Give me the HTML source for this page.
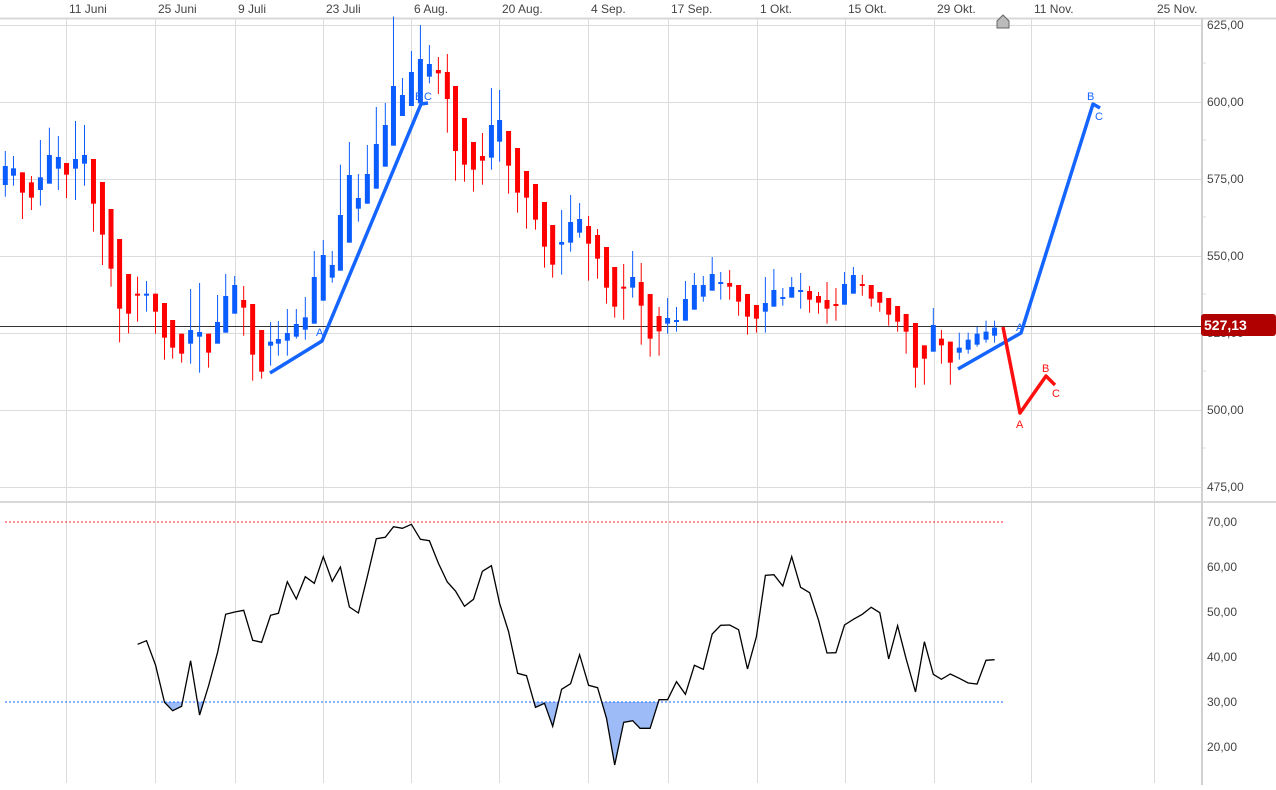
<!DOCTYPE html>
<html><head><meta charset="utf-8"><style>
html,body{margin:0;padding:0;background:#fff;}
svg{display:block;font-family:"Liberation Sans",Arial,sans-serif;}
</style></head><body>
<svg id="s" width="1276" height="790" xmlns="http://www.w3.org/2000/svg">
<rect width="1276" height="790" fill="#fff"/>
<g id="grid" stroke="#dcdcdc" stroke-width="1"></g>
<line x1="0" y1="18.5" x2="1276" y2="18.5" stroke="#d8d8d8" stroke-width="2"/>
<line x1="0" y1="502" x2="1276" y2="502" stroke="#d8d8d8" stroke-width="2"/>
<line x1="1202" y1="18" x2="1202" y2="785" stroke="#d0d0d0" stroke-width="2"/>
<g id="dates" font-size="12" fill="#444"></g>
<g id="yl" font-size="12" fill="#444"></g>
<path d="M997 28 L997 21 L1003 15 L1009 21 L1009 28 Z" fill="#bbb" stroke="#666" stroke-width="1"/>
<line x1="0" y1="326.5" x2="1202" y2="326.5" stroke="#333" stroke-width="1"/>
<g id="candles"></g>
<g fill="none" stroke="#1464ff" stroke-width="3.5" stroke-linejoin="round">
<polyline points="270,373 322,341 421,104 428,103"/>
<polyline points="958,369 1021,333 1093,104 1100,108"/>
</g>
<polyline points="1003,327 1020,413 1046,376 1055,385" fill="none" stroke="#ff1010" stroke-width="3.5" stroke-linejoin="round"/>
<g font-size="11" fill="#1464ff">
<text x="316" y="336">A</text><text x="415" y="100">B</text><text x="424" y="100">C</text>
<text x="1016" y="331">A</text><text x="1087" y="100">B</text><text x="1095" y="120">C</text>
</g>
<g font-size="11" fill="#ff1010">
<text x="1016" y="428">A</text><text x="1042" y="372">B</text><text x="1052" y="397">C</text>
</g>
<rect x="1201" y="314" width="75" height="22" rx="3" fill="#b00000"/>
<text x="1204" y="330" font-size="14" font-weight="bold" fill="#fff">527,13</text>
<line x1="5" y1="522" x2="1003" y2="522" stroke="#ff2020" stroke-width="1" stroke-dasharray="2,2"/>
<defs><clipPath id="below"><rect x="0" y="702" width="1276" height="90"/></clipPath></defs>
<polygon id="fill" clip-path="url(#below)" fill="#9dbcf7"/>
<line x1="5" y1="702" x2="1003" y2="702" stroke="#1464ff" stroke-width="1" stroke-dasharray="2,2"/>
<polyline id="rsi" fill="none" stroke="#000" stroke-width="1.3"/>
</svg>
<script>
var NS="http://www.w3.org/2000/svg",s=document.getElementById('s');
function el(p,t,a,txt){var e=document.createElementNS(NS,t);for(var k in a)e.setAttribute(k,a[k]);if(txt)e.textContent=txt;document.getElementById(p).appendChild(e);return e;}
var vx=[66,155,235,323,411,499,588,668,757,845,934,1031,1154];
vx.forEach(function(x){el('grid','line',{x1:x+.5,y1:19,x2:x+.5,y2:783});});
[25,102,179,256,333,410,487].forEach(function(y){el('grid','line',{x1:0,y1:y+.5,x2:1202,y2:y+.5});});
var dn=["11 Juni","25 Juni","9 Juli","23 Juli","6 Aug.","20 Aug.","4 Sep.","17 Sep.","1 Okt.","15 Okt.","29 Okt.","11 Nov.","25 Nov."];
vx.forEach(function(x,i){el('dates','text',{x:x+3,y:13},dn[i]);});
["625,00","600,00","575,00","550,00","525,00","500,00","475,00"].forEach(function(t,i){el('yl','text',{x:1207,y:29+77*i},t);});
["70,00","60,00","50,00","40,00","30,00","20,00"].forEach(function(t,i){el('yl','text',{x:1207,y:526+45*i},t);});
[63,140,217,294,371,448].forEach(function(y){el('grid','line',{x1:1202,y1:y,x2:1206,y2:y});});
var A=[[13,498,555,453,590,'b'],[33,505,527,468,557,'b'],[55,517,578,517,657,'r'],[77,547,593,528,630,'r'],[99,532,570,420,617,'b'],[121,465,551,383,551,'b'],[143,471,506,408,570,'b'],[163,489,524,489,594,'r'],[185,477,506,363,600,'b'],[207,465,491,375,557,'b'],[229,477,611,477,695,'r'],[251,546,704,546,795,'r'],[272,627,806,627,860,'r'],[293,717,926,717,1027,'r'],[315,822,941,822,1000,'r'],[337,881,885,830,965,'r'],[359,881,885,843,935,'b'],[381,881,935,881,1001,'r'],[403,909,1013,909,1079,'r'],[423,960,1043,960,1076,'r'],[445,1001,1061,1001,1088,'r'],[467,990,1031,867,1091,'b'],[489,996,1010,849,1118,'b'],[511,1001,1058,1001,1103,'r'],[533,966,1031,885,1031,'b'],[553,888,998,822,998,'b'],[575,855,941,828,941,'b'],[597,900,923,858,1007,'r'],[619,912,1064,912,1142,'r'],[641,990,1115,990,1136,'r'],[663,1025,1037,966,1097,'b'],[682,1017,1031,963,1067,'b'],[704,999,1022,927,1067,'b'],[726,972,1010,927,1016,'b'],[748,952,989,891,1019,'b'],[770,831,971,753,971,'b'],[792,765,902,720,902,'b'],[814,795,833,753,848,'b'],[834,645,812,494,812,'b'],[856,525,728,426,728,'b'],[878,594,626,522,665,'b'],[900,522,611,435,611,'b'],[922,432,566,321,566,'b'],[944,375,500,309,500,'b'],[964,258,437,50,437,'b'],[986,285,348,234,348,'b'],[1008,216,318,153,318,'b'],[1030,177,310,75,310,'b'],[1052,192,230,135,250,'b'],[1074,210,220,171,282,'r'],[1096,216,297,162,398,'r'],[1116,258,453,258,542,'r'],[1138,354,494,354,545,'r'],[1160,426,509,426,575,'r'],[1182,468,482,399,554,'r'],[1204,375,473,264,509,'b'],[1224,360,425,270,485,'b'],[1246,393,497,393,581,'r'],[1268,444,578,444,638,'r'],[1290,513,593,513,686,'r'],[1312,552,659,552,689,'r'],[1334,606,740,606,803,'r'],[1354,675,794,675,833,'r'],[1376,726,734,630,824,'b'],[1398,666,728,585,755,'b'],[1420,657,698,609,713,'b'],[1442,678,731,648,842,'r'],[1464,705,776,687,836,'r'],[1486,741,863,741,911,'r'],[1506,801,920,801,953,'r'],[1528,860,866,792,959,'r'],[1550,831,863,753,893,'b']];
var B=[[3,846,917,789,1034,'r'],[25,882,1016,882,1070,'r'],[47,948,994,921,1067,'r'],[68,954,971,894,1001,'b'],[90,960,962,921,995,'b'],[112,897,962,843,962,'b'],[134,855,929,819,929,'b'],[156,855,890,828,905,'b'],[178,822,872,771,872,'b'],[199,846,848,816,899,'b'],[221,849,860,810,899,'r'],[243,855,905,855,947,'r'],[265,882,950,882,1004,'r'],[287,915,956,915,998,'r'],[309,909,935,831,998,'b'],[330,870,920,807,920,'b'],[352,891,896,864,917,'b'],[374,861,893,831,893,'b'],[396,870,875,819,926,'b'],[418,873,899,858,938,'r'],[440,888,908,876,941,'r'],[461,900,926,846,971,'r'],[483,912,914,864,962,'r'],[504,852,914,816,914,'b'],[526,825,881,801,881,'b'],[548,852,854,825,887,'r'],[570,855,896,855,920,'r'],[591,876,908,876,935,'r'],[613,894,944,894,977,'r'],[635,918,965,918,995,'r'],[656,942,995,942,1061,'r'],[679,969,1103,969,1163,'r'],[701,1036,1076,1036,1154,'r'],[723,975,1055,924,1055,'b'],[743,1016,1036,990,1091,'r'],[765,1025,1088,1025,1154,'r'],[787,1043,1058,998,1079,'b'],[809,1019,1049,998,1061,'b'],[831,1001,1034,980,1040,'b'],[853,995,1019,962,1028,'b'],[874,983,1007,962,1028,'b']];
function draw(d,ox,sx){var x=ox+d[0]/sx,c=d[5]=='b'?'#0a5cff':'#ff0000';
el('candles','line',{x1:x,y1:d[3]/3,x2:x,y2:d[4]/3,stroke:c,'stroke-width':1});
var t=d[1]/3,h=Math.max(2,(d[2]-d[1])/3);el('candles','rect',{x:x-2.5,y:t,width:5,height:h,fill:c});}
A.forEach(function(d){draw(d,0,2.45);});B.forEach(function(d){draw(d,640,2.465);});
var R1=[[337,493],[359,482],[381,555],[403,667],[423,692],[445,679],[467,542],[489,705],[511,617],[533,517],[553,403],[575,396],[597,391],[619,481],[641,487],[663,406],[682,400],[704,305],[726,357],[748,290],[770,310],[792,230],[814,304],[834,261],[856,381],[878,399],[900,290],[922,176],[944,172],[964,140],[986,145],[1008,133],[1030,178],[1052,182],[1074,250],[1096,306],[1116,333],[1138,379],[1160,358],[1182,274],[1204,257],[1224,370],[1246,455],[1268,580],[1290,587],[1312,682],[1334,670],[1354,739],[1376,628],[1398,611],[1420,524],[1442,616],[1464,623],[1486,715],[1506,855],[1528,727],[1550,722]];
var R2=[[0,745],[25,745],[47,659],[68,659],[90,605],[112,643],[134,556],[156,568],[178,462],[199,436],[221,435],[243,449],[265,567],[287,470],[309,286],[330,284],[352,318],[374,230],[396,322],[418,338],[440,420],[461,519],[483,518],[504,435],[526,418],[548,403],[570,382],[591,398],[613,537],[635,437],[656,536],[679,636],[701,485],[723,583],[743,598],[765,582],[787,595],[809,609],[831,612],[853,541],[874,539]];
var pts=R1.map(function(p){return [p[0]/2.45,480+p[1]/3];}).concat(R2.map(function(p){return [640+p[0]/2.465,480+p[1]/3];}));
var str=pts.map(function(p){return p[0].toFixed(1)+','+p[1].toFixed(1);}).join(' ');
document.getElementById('rsi').setAttribute('points',str);
document.getElementById('fill').setAttribute('points',str+' '+pts[pts.length-1][0].toFixed(1)+',702 '+pts[0][0].toFixed(1)+',702');
</script>
</body></html>
